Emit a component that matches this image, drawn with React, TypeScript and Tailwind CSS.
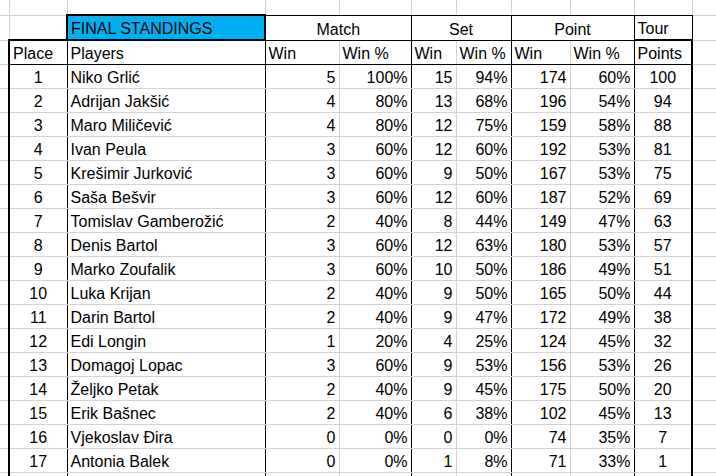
import React from "react"

type Row = [number, string, number, string, number, string, number, string, number]

const rows: Row[] = [
  [1, "Niko Grlić", 5, "100%", 15, "94%", 174, "60%", 100],
  [2, "Adrijan Jakšić", 4, "80%", 13, "68%", 196, "54%", 94],
  [3, "Maro Miličević", 4, "80%", 12, "75%", 159, "58%", 88],
  [4, "Ivan Peula", 3, "60%", 12, "60%", 192, "53%", 81],
  [5, "Krešimir Jurković", 3, "60%", 9, "50%", 167, "53%", 75],
  [6, "Saša Bešvir", 3, "60%", 12, "60%", 187, "52%", 69],
  [7, "Tomislav Gamberožić", 2, "40%", 8, "44%", 149, "47%", 63],
  [8, "Denis Bartol", 3, "60%", 12, "63%", 180, "53%", 57],
  [9, "Marko Zoufalik", 3, "60%", 10, "50%", 186, "49%", 51],
  [10, "Luka Krijan", 2, "40%", 9, "50%", 165, "50%", 44],
  [11, "Darin Bartol", 2, "40%", 9, "47%", 172, "49%", 38],
  [12, "Edi Longin", 1, "20%", 4, "25%", 124, "45%", 32],
  [13, "Domagoj Lopac", 3, "60%", 9, "53%", 156, "53%", 26],
  [14, "Željko Petak", 2, "40%", 9, "45%", 175, "50%", 20],
  [15, "Erik Bašnec", 2, "40%", 6, "38%", 102, "45%", 13],
  [16, "Vjekoslav Đira", 0, "0%", 0, "0%", 74, "35%", 7],
  [17, "Antonia Balek", 0, "0%", 1, "8%", 71, "33%", 1],
]

const widths = [9, 58, 198, 74, 72, 45, 55, 59, 64, 58, 80]

// base cell: bottom aligned text like excel
const cell = "align-bottom px-[3px] pb-[2px] leading-none whitespace-nowrap overflow-hidden"
const grid = "border-[#d4d4d4]"

export default function App() {
  return (
    <div
      className="w-[716px] h-[476px] overflow-hidden bg-white text-black text-[16px]"
      style={{ fontFamily: '"Liberation Sans", Arial, sans-serif' }}
    >
      <table className="table-fixed border-collapse w-[772px]">
        <colgroup>
          {widths.map((w, i) => (
            <col key={i} style={{ width: w }} />
          ))}
        </colgroup>
        <tbody>
          {/* partial row above the table */}
          <tr className="h-[15px]">
            <td className={`border-r border-b ${grid}`} />
            <td className={`border-r border-b ${grid}`} />
            <td className="border-r border-[#d4d4d4]" />
            <td className={`border-r ${grid} border-b border-b-black`} />
            <td className={`border-r ${grid} border-b border-b-black`} />
            <td className={`border-r ${grid} border-b border-b-black`} />
            <td className={`border-r ${grid} border-b border-b-black`} />
            <td className={`border-r ${grid} border-b border-b-black`} />
            <td className={`border-r ${grid} border-b border-b-black`} />
            <td className={`border-r ${grid} border-b border-b-black`} />
            <td className={`border-r border-b ${grid}`} />
          </tr>

          {/* group headers */}
          <tr className="h-[25px]">
            <td className={`border-r border-b ${grid}`} />
            <td className={`border-r ${grid} border-b-2 border-b-black`} />
            <td className={`${cell} border-2 border-black bg-[#00b0f0]`}>FINAL STANDINGS</td>
            <td colSpan={2} className={`${cell} text-center border-r border-b border-black`}>
              Match
            </td>
            <td colSpan={2} className={`${cell} text-center border-r border-b border-black`}>
              Set
            </td>
            <td colSpan={2} className={`${cell} text-center border-r border-b border-black`}>
              Point
            </td>
            <td className={`${cell} border-r border-r-black border-b-2 border-b-black`}>Tour</td>
            <td className={`border-r border-b ${grid}`} />
          </tr>

          {/* column headers */}
          <tr className="h-[24px]">
            <td className={`border-b ${grid} border-r-2 border-r-black`} />
            <td className={`${cell} border-r border-b border-black`}>Place</td>
            <td className={`${cell} border-r border-b border-black`}>Players</td>
            <td className={`${cell} border-r ${grid} border-b border-b-black`}>Win</td>
            <td className={`${cell} border-r border-b border-black`}>Win %</td>
            <td className={`${cell} border-r ${grid} border-b border-b-black`}>Win</td>
            <td className={`${cell} border-r border-b border-black`}>Win %</td>
            <td className={`${cell} border-r ${grid} border-b border-b-black`}>Win</td>
            <td className={`${cell} border-r border-b border-black`}>Win %</td>
            <td className={`${cell} border-r-2 border-r-black border-b border-b-black`}>Points</td>
            <td className={`border-r border-b ${grid}`} />
          </tr>

          {rows.map((r) => (
            <tr key={r[0]} className="h-[24px]">
              <td className={`border-b ${grid} border-r-2 border-r-black`} />
              <td className={`${cell} text-center border-b ${grid} border-r border-r-black`}>{r[0]}</td>
              <td className={`${cell} border-b ${grid} border-r border-r-black`}>{r[1]}</td>
              <td className={`${cell} text-right border-r border-b ${grid}`}>{r[2]}</td>
              <td className={`${cell} text-right border-b ${grid} border-r border-r-black`}>{r[3]}</td>
              <td className={`${cell} text-right border-r border-b ${grid}`}>{r[4]}</td>
              <td className={`${cell} text-right border-b ${grid} border-r border-r-black`}>{r[5]}</td>
              <td className={`${cell} text-right border-r border-b ${grid}`}>{r[6]}</td>
              <td className={`${cell} text-right border-b ${grid} border-r border-r-black`}>{r[7]}</td>
              <td className={`${cell} text-center border-b ${grid} border-r-2 border-r-black`}>{r[8]}</td>
              <td className={`border-r border-b ${grid}`} />
            </tr>
          ))}

          {/* next row, cut off by the window */}
          <tr className="h-[24px]">
            <td className={`border-b ${grid} border-r-2 border-r-black`} />
            <td className={`border-b ${grid} border-r border-r-black`} />
            <td className={`border-b ${grid} border-r border-r-black`} />
            <td className={`border-r border-b ${grid}`} />
            <td className={`border-b ${grid} border-r border-r-black`} />
            <td className={`border-r border-b ${grid}`} />
            <td className={`border-b ${grid} border-r border-r-black`} />
            <td className={`border-r border-b ${grid}`} />
            <td className={`border-b ${grid} border-r border-r-black`} />
            <td className={`border-b ${grid} border-r-2 border-r-black`} />
            <td className={`border-r border-b ${grid}`} />
          </tr>
        </tbody>
      </table>
    </div>
  )
}
